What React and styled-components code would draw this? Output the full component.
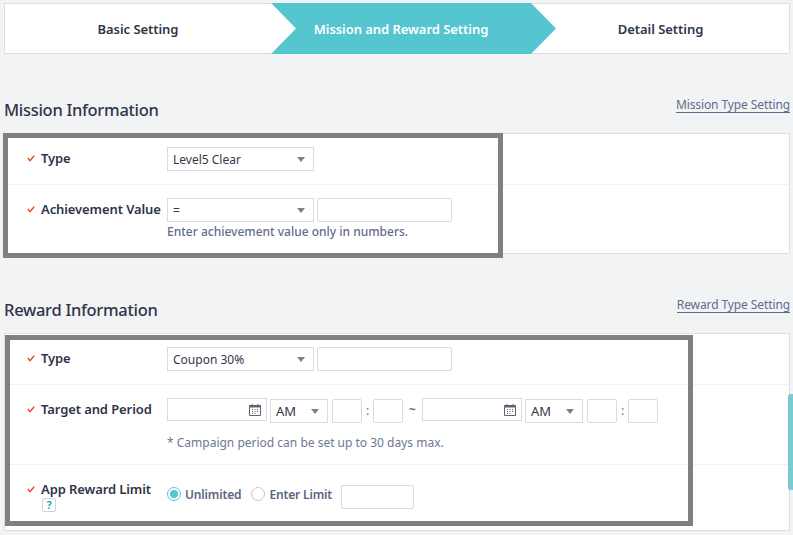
import React from 'react';
import styled, { createGlobalStyle } from 'styled-components';

const Global = createGlobalStyle`
  html, body {
    margin: 0;
    height: 535px;
    overflow: hidden;
    background: #f2f3f5;
    font-family: "Noto Sans", "Noto Sans CJK KR", sans-serif;
    color: #2f3548;
  }
  * { box-sizing: border-box; }
`;

const Page = styled.div`
  position: relative;
  width: 793px;
  height: 535px;
  padding: 3px 3px 0 4px;
  overflow: hidden;
`;

const Steps = styled.div`
  display: flex;
  height: 51px;
  background: #fff;
  border: 1px solid #dcdee3;
`;

const Step = styled.div`
  flex: 0 0 ${(p) => p.$width}px;
  display: flex;
  align-items: center;
  justify-content: center;
  font-size: 13px;
  font-weight: 600;
  letter-spacing: -0.05px;
`;

const ActiveStep = styled(Step)`
  flex: 0 0 285px;
  height: 51px;
  margin: -1px -25px -1px 0;
  padding-right: 25px;
  color: #fff;
  background: #55c5d0;
  clip-path: polygon(0 0, 260px 0, 285px 50%, 260px 100%, 0 100%, 25px 50%);
  position: relative;
  z-index: 1;
`;

const SectionHead = styled.div`
  display: flex;
  justify-content: space-between;
  align-items: flex-end;
  height: 79px;
  padding-bottom: 12px;
`;

const Title = styled.h2`
  margin: 0;
  font-size: 16.5px;
  line-height: 22px;
  font-weight: 500;
  letter-spacing: -0.3px;
`;

const HeadLink = styled.a`
  font-size: 12px;
  line-height: 15px;
  margin-bottom: 8px;
  letter-spacing: -0.1px;
  color: #5f6d8c;
  border-bottom: 1px solid #5f6d8c;
`;

const Card = styled.section`
  position: relative;
  background: #fff;
  border: 1px solid #dcdee3;
`;

const Row = styled.div`
  display: grid;
  grid-template-columns: 162px 1fr;
  height: ${(p) => p.$height}px;
  padding-top: ${(p) => p.$top || 13}px;
  & + & {
    border-top: 1px solid #f0f1f3;
  }
`;

const Label = styled.div`
  display: flex;
  align-items: flex-start;
  gap: 6px;
  padding: 2px 0 0 22px;
  font-size: 13px;
  line-height: 18px;
  font-weight: 600;
  letter-spacing: -0.1px;
  white-space: nowrap;
  svg {
    margin-top: 6px;
    flex: none;
  }
`;

const Controls = styled.div`
  display: flex;
  align-items: center;
  height: 24px;
  margin-top: ${(p) => p.$shift || 0}px;
`;

const Select = styled.div`
  position: relative;
  width: ${(p) => p.$width}px;
  height: 24px;
  margin-right: ${(p) => p.$gap || 0}px;
  padding-left: 5px;
  background: #fff;
  border: 1px solid #d9dbe0;
  font-size: ${(p) => p.$size || 12}px;
  line-height: ${(p) => (p.$size ? 22 : 23)}px;
  color: #33384a;
  &::after {
    content: '';
    position: absolute;
    right: 8px;
    top: 9px;
    border: 4px solid transparent;
    border-top: 5px solid #7a8090;
    border-bottom: 0;
  }
`;

const Field = styled.input`
  display: block;
  width: ${(p) => p.$width}px;
  height: 24px;
  padding: 0;
  background: #fff;
  border: 1px solid #d9dbe0;
  border-radius: 2px;
  outline: none;
`;

const DateBox = styled.div`
  display: flex;
  align-items: center;
  justify-content: flex-end;
  align-self: flex-start;
  width: 100px;
  height: 23px;
  margin: -1px 3px 0 0;
  padding-right: 5px;
  background: #fff;
  border: 1px solid #d9dbe0;
`;

const Colon = styled.span`
  width: ${(p) => p.$width}px;
  text-align: center;
  font-size: 12px;
  line-height: 20px;
  color: #5f6d8c;
`;

const Tilde = styled(Colon)`
  font-weight: 700;
  line-height: 14px;
  padding-bottom: 3px;
`;

const Help = styled.div`
  margin-top: 1px;
  padding-top: 1px;
  font-size: 12px;
  line-height: 16px;
  font-weight: 500;
  color: #5f6d8c;
`;

const Note = styled(Help)`
  margin-top: 11px;
  font-weight: 400;
  font-size: 12px;
  color: #6d7891;
`;

const RadioGroup = styled.label`
  display: flex;
  align-items: center;
  gap: 4px;
  margin: -6px ${(p) => p.$gap}px 0 0;
  font-size: 12px;
  font-weight: 600;
  letter-spacing: -0.15px;
  color: #5a6580;
`;

const Radio = styled.span`
  width: 14px;
  height: 14px;
  border-radius: 50%;
  background: #fff;
  border: 1px solid ${(p) => (p.$on ? '#55c5d0' : '#c4c7cd')};
  display: flex;
  align-items: center;
  justify-content: center;
  &::after {
    content: '';
    width: 8px;
    height: 8px;
    border-radius: 50%;
    background: ${(p) => (p.$on ? '#55c5d0' : 'transparent')};
  }
`;

const LabelStack = styled.div`
  margin-top: -7px;
`;

const HelpLine = styled.div`
  display: flex;
  padding-left: 37px;
`;

const HelpIcon = styled.span`
  width: 14px;
  height: 14px;
  border: 1px solid #d0d3d8;
  border-radius: 2px;
  font-size: 11px;
  line-height: 12px;
  font-weight: 700;
  text-align: center;
  color: #2ea9b5;
`;

const Highlight = styled.div`
  position: absolute;
  left: ${(p) => p.$left}px;
  top: ${(p) => p.$top}px;
  width: ${(p) => p.$width}px;
  height: ${(p) => p.$height}px;
  border: 5px solid #808080;
  pointer-events: none;
`;

const ScrollThumb = styled.div`
  position: absolute;
  right: 0;
  top: 394px;
  width: 5px;
  height: 96px;
  background: #78cbd3;
  border-radius: 2px 0 0 2px;
`;

const Check = () => (
  <svg width="8" height="7" viewBox="0 0 8 7">
    <path d="M0.8 3 L3 5.6 L7.2 0.8" fill="none" stroke="#f0441c" strokeWidth="1.4" />
  </svg>
);

const Calendar = () => (
  <svg width="12" height="12" viewBox="0 0 12 12">
    <path d="M0.5 1.5h11v10h-11z" fill="none" stroke="#5d6670" />
    <path d="M0.5 1h11v2.5h-11z" fill="#5d6670" />
    <path d="M3 0v2M9 0v2" stroke="#5d6670" />
    <path d="M3 5.5h1M5.5 5.5h1M8 5.5h1M3 7.5h1M5.5 7.5h1M8 7.5h1M3 9.5h1M5.5 9.5h1" stroke="#5d6670" />
  </svg>
);

const Time = () => (
  <>
    <Field $width={30} />
    <Colon $width={11}>:</Colon>
    <Field $width={30} />
  </>
);

const App = () => {
  return (
    <Page>
      <Global />
      <Steps>
        <Step $width={266}>Basic Setting</Step>
        <ActiveStep>Mission and Reward Setting</ActiveStep>
        <Step $width={259}>Detail Setting</Step>
      </Steps>

      <SectionHead>
        <Title>Mission Information</Title>
        <HeadLink>Mission Type Setting</HeadLink>
      </SectionHead>
      <Card>
        <Row $height={50}>
          <Label><Check />Type</Label>
          <Controls><Select $width={147}>Level5 Clear</Select></Controls>
        </Row>
        <Row $height={69}>
          <Label><Check />Achievement Value</Label>
          <div>
            <Controls>
              <Select $width={147} $gap={3}>=</Select>
              <Field $width={135} />
            </Controls>
            <Help>Enter achievement value only in numbers.</Help>
          </div>
        </Row>
        <Highlight $left={-2} $top={-1} $width={500} $height={125} />
      </Card>

      <SectionHead>
        <Title>Reward Information</Title>
        <HeadLink>Reward Type Setting</HeadLink>
      </SectionHead>
      <Card>
        <Row $height={50}>
          <Label><Check />Type</Label>
          <Controls>
            <Select $width={147} $gap={3}>Coupon 30%</Select>
            <Field $width={135} />
          </Controls>
        </Row>
        <Row $height={80}>
          <Label><Check />Target and Period</Label>
          <div>
            <Controls $shift={1}>
              <DateBox><Calendar /></DateBox>
              <Select $width={58} $gap={4} $size={13}>AM</Select>
              <Time />
              <Tilde $width={19}>~</Tilde>
              <DateBox><Calendar /></DateBox>
              <Select $width={58} $gap={4} $size={13}>AM</Select>
              <Time />
            </Controls>
            <Note>* Campaign period can be set up to 30 days max.</Note>
          </div>
        </Row>
        <Row $height={66} $top={20}>
          <LabelStack>
            <Label><Check />App Reward Limit</Label>
            <HelpLine><HelpIcon>?</HelpIcon></HelpLine>
          </LabelStack>
          <Controls>
            <RadioGroup $gap={10}><Radio $on />Unlimited</RadioGroup>
            <RadioGroup $gap={9}><Radio />Enter Limit</RadioGroup>
            <Field $width={73} />
          </Controls>
        </Row>
        <Highlight $left={0} $top={1} $width={688} $height={191} />
      </Card>
      <ScrollThumb />
    </Page>
  );
};

export default App;
